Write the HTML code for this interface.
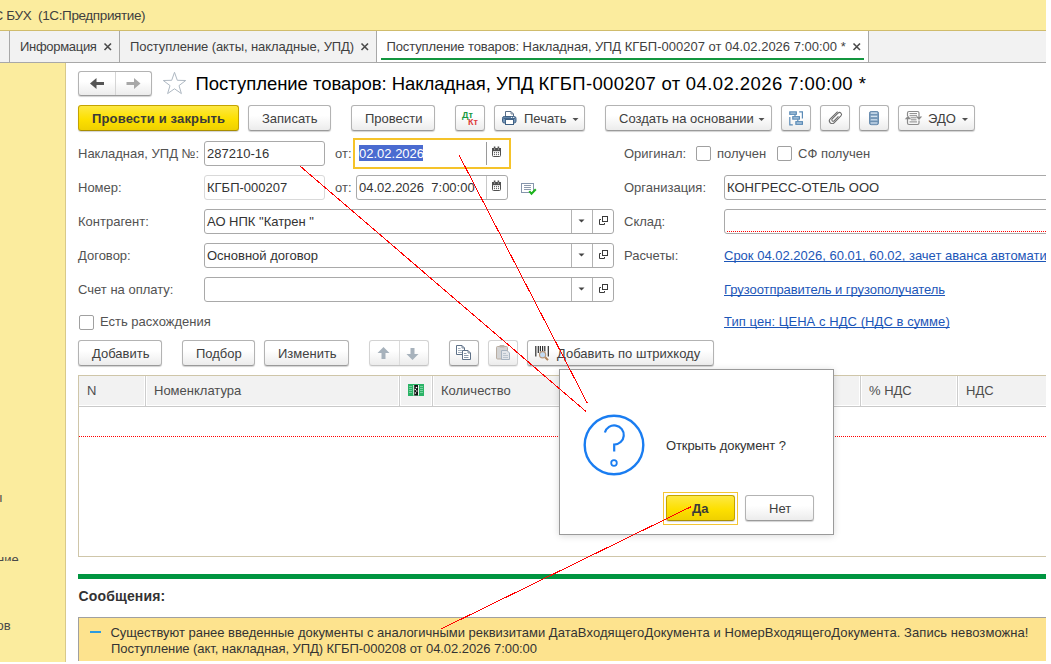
<!DOCTYPE html>
<html><head><meta charset="utf-8">
<style>
*{box-sizing:border-box;margin:0;padding:0}
html,body{width:1051px;height:664px;overflow:hidden;background:#fff}
body{position:relative;font-family:"Liberation Sans",sans-serif;font-size:13px;line-height:15px;color:#333}
.a{position:absolute;white-space:nowrap}
.t{position:absolute;white-space:nowrap;line-height:15px}
#titlebar{left:0;top:0;width:1051px;height:31px;background:#FBEC9E;border-bottom:1px solid #D0BC6C}
#tabbar{left:0;top:31px;width:1051px;height:32px;background:#F2F2F2;border-bottom:1px solid #A8A8A8}
.tsep{top:31px;width:1px;height:31px;background:#A8A8A8}
#side{left:0;top:63px;width:66px;height:601px;background:#FBEC9E;border-right:1px solid #D8C98A}
.btn{position:absolute;height:26px;border:1px solid #B3B3B3;border-bottom-color:#9A9A9A;border-radius:3px;background:linear-gradient(#FFFFFF 0%,#FFFFFF 40%,#ECECEC 100%);box-shadow:0 1px 1px rgba(0,0,0,.18);color:#404040;white-space:nowrap;overflow:hidden}
.btn.dis{border-color:#D3D3D3;border-bottom-color:#C4C4C4;box-shadow:0 1px 1px rgba(0,0,0,.08)}
.btn.y{background:linear-gradient(#FDE843 0%,#FDE000 55%,#EFD000 100%);border-color:#C4A300;border-bottom-color:#A88D00;font-weight:bold;color:#3A3A3A}
.lbl{position:absolute;white-space:nowrap;color:#525252;line-height:15px}
.inp{position:absolute;height:25px;border:1px solid #A9A9A9;border-radius:3px;background:#fff;color:#333;white-space:nowrap;overflow:hidden}
.inp.ro{border-color:#D9D9D9}
.link{position:absolute;white-space:nowrap;color:#1C56B8;line-height:15px;text-decoration:underline;text-decoration-skip-ink:none}
.cb{position:absolute;width:15px;height:15px;border:1px solid #A0A0A0;border-radius:2px;background:#fff}
.vsep{position:absolute;width:1px;background:#B3B3B3}
svg{position:absolute;overflow:visible}
</style></head><body>
<div id="titlebar" class="a"></div>
<div class="t" style="left:-6.4px;top:8px;font-size:13.5px;letter-spacing:-0.38px;color:#3F3F3F">С БУХ&nbsp;&nbsp;(1С:Предприятие)</div>
<div id="tabbar" class="a"></div>
<div class="a tsep" style="left:9px"></div>
<div class="t" style="left:20px;top:39px;color:#3F3F3F;letter-spacing:-0.3px">Информация</div>
<div class="a tsep" style="left:119px"></div>
<div class="t" style="left:130px;top:39px;color:#3F3F3F;letter-spacing:-0.09px">Поступление (акты, накладные, УПД)</div>
<div class="a tsep" style="left:376px"></div>
<div class="a" style="left:377px;top:31px;width:491px;height:31px;background:#fff"></div>
<div class="t" style="left:386.5px;top:39px;color:#3F3F3F;letter-spacing:-0.11px">Поступление товаров: Накладная, УПД</div>
<div class="t" style="left:624.7px;top:39px;color:#3F3F3F">КГБП-000207 от 04.02.2026 7:00:00 *</div>
<div class="a" style="left:381px;top:58px;width:483px;height:2px;background:#13963F"></div>
<div class="a tsep" style="left:868px"></div>
<svg style="left:0;top:0" width="1" height="1"><g stroke="#4A4A4A" stroke-width="1.6"><path d="M104.5 43.5l6.5 6.5M111 43.5L104.5 50"/><path d="M361.5 43.5l6.5 6.5M368 43.5L361.5 50"/><path d="M853.5 43.5l6.5 6.5M860 43.5L853.5 50"/></g></svg>

<div id="side" class="a"></div>
<div class="t" style="left:-7px;top:490px;color:#4A4A4A">ы</div>
<div class="a" style="left:0;top:556px;width:30px;height:5px;overflow:hidden"><div class="t" style="left:-3px;top:-4px;color:#4A4A4A">ние</div></div>
<div class="t" style="left:-3.4px;top:618px;color:#4A4A4A">ов</div>

<!-- form header -->
<div class="btn" style="left:78px;top:71px;width:74px;height:25px"></div>
<div class="a" style="left:115px;top:72px;width:1px;height:23px;background:#D5D5D5"></div>
<svg style="left:0;top:0" width="1" height="1">
 <path d="M90 83.5L96.5 78v4h7.5v3h-7.5v4z" fill="#555"/>
 <path d="M140.5 83.5L134 78v4h-7.5v3h7.5v4z" fill="#A8A8A8"/>
 <path d="M174.5 72.3 L177.3 80.3 L185.7 80.5 L179.0 85.6 L181.4 93.6 L174.5 88.8 L167.6 93.6 L170.0 85.6 L163.3 80.5 L171.7 80.3z" fill="none" stroke="#AEB8C2" stroke-width="1"/>
</svg>
<div class="t" style="left:195.6px;top:73.5px;font-size:18.5px;line-height:20px;color:#000;letter-spacing:-0.04px">Поступление товаров: Накладная, УПД</div>
<div class="t" style="left:538.4px;top:73.5px;font-size:18.5px;line-height:20px;color:#000;letter-spacing:0.33px">КГБП-000207 от</div>
<div class="t" style="left:685.8px;top:73.5px;font-size:18.5px;line-height:20px;color:#000;letter-spacing:0.435px">04.02.2026 7:00:00 *</div>

<!-- toolbar -->
<div class="btn y" style="left:78px;top:105px;width:161px"></div>
<div class="t" style="left:92px;top:111px;font-weight:bold;color:#3A3A3A;letter-spacing:0.15px">Провести и закрыть</div>
<div class="btn" style="left:248px;top:105px;width:83px"></div>
<div class="t" style="left:262px;top:111px;color:#404040">Записать</div>
<div class="btn" style="left:351px;top:105px;width:84px"></div>
<div class="t" style="left:365px;top:111px;color:#404040">Провести</div>
<div class="btn" style="left:455px;top:105px;width:30px"></div>
<div class="t" style="left:462px;top:109.5px;font-size:9px;line-height:10px;font-weight:bold;color:#17993F">Дт</div>
<div class="t" style="left:468px;top:117px;font-size:9px;line-height:10px;font-weight:bold;color:#DD3B3B">Кт</div>
<div class="btn" style="left:494px;top:105px;width:91px"></div>
<svg style="left:0;top:0" width="1" height="1">
 <path d="M505.5 116.5V111.5h5.5l2.5 2.5v2.5" fill="#fff" stroke="#5A6F88" stroke-width="1"/>
 <path d="M511 111.5v2.5h2.5" fill="none" stroke="#5A6F88" stroke-width=".8"/>
 <rect x="502.5" y="116.5" width="13.5" height="6.5" rx="1.8" fill="#7596B9" stroke="#3F6185" stroke-width="1"/>
 <path d="M503.5 118.3h11.5" stroke="#3F6185" stroke-width="1.2"/>
 <circle cx="511.6" cy="117.4" r=".55" fill="#fff"/><circle cx="513.7" cy="117.4" r=".55" fill="#fff"/>
 <rect x="505.5" y="119.5" width="8" height="5" fill="#fff" stroke="#3F6185" stroke-width="1"/>
</svg>
<div class="t" style="left:524px;top:111px;color:#404040">Печать</div>
<svg style="left:0;top:0" width="1" height="1"><path d="M572.5 118h6l-3 3z" fill="#505050"/></svg>
<div class="btn" style="left:605px;top:105px;width:167px"></div>
<div class="t" style="left:619px;top:111px;color:#404040">Создать на основании</div>
<svg style="left:0;top:0" width="1" height="1"><path d="M758.5 118h6l-3 3z" fill="#505050"/></svg>
<div class="btn" style="left:781px;top:105px;width:30px"></div>
<svg style="left:0;top:0" width="1" height="1">
 <g fill="#B3CCE2" stroke="#5A8AB6" stroke-width="1.2">
  <rect x="789.8" y="111.9" width="6.5" height="2.4"/>
  <rect x="792.8" y="116.7" width="6.6" height="2.4"/>
  <rect x="795.9" y="121.7" width="6.5" height="2.6"/>
 </g>
 <path d="M795 114.5v2M797.8 119.3v2.2M789.8 117v7.8h3M799.2 111.8h3.2v6.8" fill="none" stroke="#5A8AB6" stroke-width="1.2"/>
</svg>
<div class="btn" style="left:820px;top:105px;width:30px"></div>
<svg style="left:0;top:0" width="1" height="1">
 <path transform="translate(835.5 117.5) rotate(-45) scale(0.88)" d="M6.5 -3.1L-5.4 -3.1A3.1 3.1 0 0 0 -5.4 3.1L5.6 3.1A2.3 2.3 0 0 0 5.6 -1.5L-3.8 -1.5A1.5 1.5 0 0 0 -3.8 1.5L3.2 1.5" fill="none" stroke="#6A6A6A" stroke-width="1.2"/>
</svg>
<div class="btn" style="left:859px;top:105px;width:30px"></div>
<svg style="left:0;top:0" width="1" height="1">
 <rect x="869.5" y="111.5" width="9" height="13.2" rx="1.6" fill="#8BA9C6" stroke="#6A8DAF" stroke-width="1"/>
 <path d="M869.5 114.8h9M869.5 118.1h9M869.5 121.4h9" stroke="#6A8DAF" stroke-width="1"/>
 <path d="M871 113.1h6M871 116.4h6M871 119.7h6M871 123h6" stroke="#D3E2EF" stroke-width="1.1"/>
</svg>
<div class="btn" style="left:898px;top:105px;width:77px"></div>
<svg style="left:0;top:0" width="1" height="1">
 <path d="M907.5 116v-3a1.5 1.5 0 0 1 1.5-1.5h8.5a1.5 1.5 0 0 1 1.5 1.5v3.5M907.5 119v4a1.5 1.5 0 0 0 1.5 1.5h8.5a1.5 1.5 0 0 0 1.5-1.5v-2.5" fill="none" stroke="#8A8A8A" stroke-width="1.2"/>
 <path d="M909.5 113.6h7.5M909.5 115.7h7.5M910.5 117.8h6M911 119.8h5.5M909.5 121.9h7.5" stroke="#8A8A8A" stroke-width="1"/>
 <path d="M904.8 119.2l3.2-3.4 3.2 3.4z" fill="#8A8A8A"/>
 <path d="M915.8 116.6h6.4l-3.2 3.4z" fill="#8A8A8A"/>
</svg>
<div class="t" style="left:928px;top:111px;color:#404040">ЭДО</div>
<svg style="left:0;top:0" width="1" height="1"><path d="M962 118h6l-3 3z" fill="#505050"/></svg>

<!-- rows -->
<div class="lbl" style="left:78px;top:146px">Накладная, УПД №:</div>
<div class="inp" style="left:204px;top:141px;width:121px"></div>
<div class="t" style="left:207px;top:146px">287210-16</div>
<div class="lbl" style="left:335px;top:146px">от:</div>
<div class="a" style="left:353px;top:138px;width:158px;height:31px;border:2px solid #F5C32A;background:#fff"></div>
<div class="a" style="left:359px;top:145px;width:64px;height:16px;background:#4A6BD0"></div>
<div class="t" style="left:359px;top:146px;color:#fff">02.02.2026</div>
<div class="vsep" style="left:486px;top:142px;height:23px;background:#9A9A9A"></div>

<div class="lbl" style="left:78px;top:180px">Номер:</div>
<div class="inp ro" style="left:204px;top:175px;width:121px"></div>
<div class="t" style="left:207px;top:180px">КГБП-000207</div>
<div class="lbl" style="left:335px;top:180px">от:</div>
<div class="inp" style="left:356px;top:175px;width:152px"></div>
<div class="t" style="left:359px;top:180px">04.02.2026&nbsp;&nbsp;7:00:00</div>
<div class="vsep" style="left:486px;top:176px;height:23px;background:#C8C8C8"></div>
<svg style="left:0;top:0" width="1" height="1">
 <g id="cal"><rect x="492.5" y="148.5" width="8" height="8" rx="1" fill="#fff" stroke="#505050" stroke-width="1"/><rect x="492" y="148" width="9" height="3.2" fill="#505050"/><path d="M494.6 146.6v2.6M498.4 146.6v2.6" stroke="#505050" stroke-width="1.6"/><path d="M494.6 148.6v.9M498.4 148.6v.9" stroke="#fff" stroke-width=".8"/><g fill="#505050"><circle cx="494.5" cy="152.7" r=".6"/><circle cx="496.5" cy="152.7" r=".6"/><circle cx="498.5" cy="152.7" r=".6"/><circle cx="494.5" cy="154.6" r=".6"/><circle cx="496.5" cy="154.6" r=".6"/><circle cx="498.5" cy="154.6" r=".6"/></g></g>
 <use href="#cal" x="0" y="34"/>
 <rect x="521.5" y="183.5" width="12" height="9" fill="#fff" stroke="#8696AC" stroke-width="1"/>
 <path d="M524 185.5h7M524 187.5h7M524 189.5h7" stroke="#8E9BAE" stroke-width="1"/>
 <path d="M529.3 191.2l2.2 2.6 4.3-4.6" fill="none" stroke="#1DB41D" stroke-width="2"/>
</svg>

<div class="lbl" style="left:78px;top:214px">Контрагент:</div>
<div class="inp" style="left:204px;top:209px;width:410px"></div>
<div class="t" style="left:207px;top:214px">АО НПК "Катрен "</div>
<div class="lbl" style="left:78px;top:248px">Договор:</div>
<div class="inp" style="left:204px;top:243px;width:410px"></div>
<div class="t" style="left:207px;top:248px">Основной договор</div>
<div class="lbl" style="left:78px;top:282px">Счет на оплату:</div>
<div class="inp" style="left:204px;top:277px;width:410px"></div>
<div class="vsep" style="left:571px;top:210px;height:23px"></div><div class="vsep" style="left:592px;top:210px;height:23px"></div>
<div class="vsep" style="left:571px;top:244px;height:23px"></div><div class="vsep" style="left:592px;top:244px;height:23px"></div>
<div class="vsep" style="left:571px;top:278px;height:23px"></div><div class="vsep" style="left:592px;top:278px;height:23px"></div>
<svg style="left:0;top:0" width="1" height="1">
 <g id="dd"><path d="M578.5 219.5h6l-3 3z" fill="#444"/>
 <rect x="602.5" y="216.5" width="5" height="5" fill="none" stroke="#3A3A3A" stroke-width="1"/><path d="M601 219.5H599.5V224.5H604.5V223" fill="none" stroke="#3A3A3A" stroke-width="1"/></g>
 <use href="#dd" x="0" y="34"/><use href="#dd" x="0" y="68"/>
</svg>

<!-- right column -->
<div class="lbl" style="left:624px;top:146px">Оригинал:</div>
<div class="cb" style="left:696px;top:146px"></div>
<div class="lbl" style="left:717px;top:146px">получен</div>
<div class="cb" style="left:777px;top:146px"></div>
<div class="lbl" style="left:798px;top:146px">СФ получен</div>
<div class="lbl" style="left:624px;top:180px">Организация:</div>
<div class="inp" style="left:724px;top:175px;width:340px"></div>
<div class="t" style="left:727px;top:180px">КОНГРЕСС-ОТЕЛЬ ООО</div>
<div class="lbl" style="left:624px;top:214px">Склад:</div>
<div class="inp" style="left:724px;top:209px;width:340px"></div>
<div class="a" style="left:727px;top:231px;width:330px;height:1px;background-image:linear-gradient(90deg,#FF0000 50%,transparent 50%);background-size:2px 1px"></div>
<div class="lbl" style="left:624px;top:248px">Расчеты:</div>
<div class="link" style="left:724px;top:248px">Срок 04.02.2026, 60.01, 60.02, зачет аванса автоматически</div>
<div class="link" style="left:724px;top:282px;letter-spacing:-0.06px">Грузоотправитель и грузополучатель</div>
<div class="link" style="left:724px;top:314px;letter-spacing:0.06px">Тип цен: ЦЕНА с НДС (НДС в сумме)</div>

<!-- checkbox row -->
<div class="cb" style="left:79px;top:315px"></div>
<div class="lbl" style="left:100px;top:314px">Есть расхождения</div>

<!-- table toolbar -->
<div class="btn" style="left:78px;top:340px;width:84px"></div>
<div class="t" style="left:92px;top:346px;color:#404040">Добавить</div>
<div class="btn" style="left:182px;top:340px;width:73px"></div>
<div class="t" style="left:196px;top:346px;color:#404040">Подбор</div>
<div class="btn" style="left:264px;top:340px;width:85px"></div>
<div class="t" style="left:278px;top:346px;color:#404040">Изменить</div>
<div class="btn dis" style="left:369px;top:340px;width:60px"></div>
<div class="a" style="left:399px;top:341px;width:1px;height:24px;background:#DCDCDC"></div>
<svg style="left:0;top:0" width="1" height="1">
 <path d="M383.5 347l-6 6h4v6h4v-6h4z" fill="#A7B2BC"/>
 <path d="M412.5 360l-6-6h4v-6h4v6h4z" fill="#A7B2BC"/>
</svg>
<div class="btn" style="left:449px;top:340px;width:30px"></div>
<svg style="left:0;top:0" width="1" height="1">
 <path d="M456.5 345.5h5.5l2.5 2.5v6.5h-8z" fill="#fff" stroke="#5E7188" stroke-width="1"/>
 <path d="M462 345.5v2.5h2.5" fill="none" stroke="#5E7188" stroke-width=".8"/>
 <path d="M458 348.5h2.5M458 350.5h4.5M458 352.5h4.5" stroke="#9AA8B8" stroke-width=".9"/>
 <path d="M462.5 350.5h5.5l2.5 2.5v6.5h-8z" fill="#fff" stroke="#5E7188" stroke-width="1"/>
 <path d="M468 350.5v2.5h2.5" fill="none" stroke="#5E7188" stroke-width=".8"/>
 <path d="M464 353.5h2.5M464 355.5h4.5M464 357.5h4.5" stroke="#7F90A4" stroke-width=".9"/>
</svg>
<div class="btn dis" style="left:488px;top:340px;width:30px"></div>
<svg style="left:0;top:0" width="1" height="1">
 <rect x="496.5" y="346.5" width="11" height="12.5" rx="1" fill="#D3D3D3" stroke="#B9ADA2" stroke-width="1"/>
 <rect x="499.5" y="345" width="5" height="2.5" rx=".8" fill="#BDB2A8"/>
 <path d="M501.5 350.5h5.5l2.5 2.5v6.5h-8z" fill="#E3E6EA" stroke="#A6B3C0" stroke-width="1"/>
 <path d="M503 353.5h3M503 355.5h5M503 357.5h5" stroke="#B5C0CB" stroke-width=".9"/>
</svg>
<div class="btn" style="left:527px;top:340px;width:187px"></div>
<svg style="left:0;top:0" width="1" height="1">
 <path d="M535.8 346v10.5M538.3 346v7M540.4 346v5.5M542.6 346v5.5M544.8 346v5.5M548.3 346v10.5" stroke="#2E2E2E" stroke-width="1.2"/>
 <path d="M545.2 357.3l2.8 2.8" stroke="#B08358" stroke-width="2"/>
 <circle cx="542.6" cy="354.8" r="3.1" fill="#C3DBF3" stroke="#B8997C" stroke-width="1.2"/>
</svg>
<div class="t" style="left:557px;top:346px;color:#404040">Добавить по штрихкоду</div>

<!-- table -->
<div class="a" style="left:78px;top:375px;width:968px;height:182px;border:1px solid #CFC6A9;border-right:none"></div>
<div class="a" style="left:79px;top:376px;width:967px;height:31px;background:#F2F2F2;border-bottom:1px solid #C9C9C9"></div>
<div class="a" style="left:79px;top:405px;width:967px;height:1px;background:#fff"></div>
<div class="a" style="left:144px;top:376px;width:3px;height:30px;background:#fff"></div><div class="vsep" style="left:145px;top:376px;height:30px;background:#CDCDCD"></div>
<div class="a" style="left:398px;top:376px;width:3px;height:30px;background:#fff"></div><div class="vsep" style="left:399px;top:376px;height:30px;background:#CDCDCD"></div>
<div class="a" style="left:431px;top:376px;width:3px;height:30px;background:#fff"></div><div class="vsep" style="left:432px;top:376px;height:30px;background:#CDCDCD"></div>
<div class="a" style="left:859px;top:376px;width:3px;height:30px;background:#fff"></div><div class="vsep" style="left:860px;top:376px;height:30px;background:#CDCDCD"></div>
<div class="a" style="left:956px;top:376px;width:3px;height:30px;background:#fff"></div><div class="vsep" style="left:957px;top:376px;height:30px;background:#CDCDCD"></div>
<div class="t" style="left:87px;top:383px;color:#4D4D4D">N</div>
<div class="t" style="left:154px;top:383px;color:#4D4D4D">Номенклатура</div>
<svg style="left:0;top:0" width="1" height="1">
 <rect x="408" y="384" width="16" height="12" fill="#2BB366"/>
 <path d="M409 386.5h3M409 388.5h3M409 390.5h3M409 392.5h3M420 386.5h3M420 388.5h3M420 390.5h3M420 392.5h3" stroke="#7FD6A6" stroke-width=".9"/>
 <rect x="413.3" y="385" width="5.6" height="10.5" fill="#fff"/>
 <rect x="414.2" y="385" width="3.8" height="10.5" fill="#111"/>
 <circle cx="416.5" cy="387.5" r=".8" fill="#fff"/><circle cx="415.3" cy="389.5" r=".7" fill="#fff"/><circle cx="416.8" cy="391" r=".7" fill="#fff"/><circle cx="415.4" cy="393" r=".8" fill="#fff"/>
</svg>
<div class="t" style="left:441px;top:383px;color:#4D4D4D">Количество</div>
<div class="t" style="left:869px;top:383px;color:#4D4D4D">% НДС</div>
<div class="t" style="left:966px;top:383px;color:#4D4D4D">НДС</div>
<div class="a" style="left:79px;top:436px;width:967px;height:1px;background-image:linear-gradient(90deg,#FF0000 50%,transparent 50%);background-size:2px 1px"></div>

<!-- green bar & messages -->
<div class="a" style="left:78px;top:574px;width:968px;height:5px;background:#009540"></div>
<div class="t" style="left:78.5px;top:589px;font-weight:bold;font-size:14px;color:#333;letter-spacing:0.15px">Сообщения:</div>
<div class="a" style="left:78px;top:617px;width:968px;height:44px;background:#FDE38E;border-top:1px solid #A0A0A0;border-left:1px solid #A0A0A0"></div>
<div class="a" style="left:90px;top:631px;width:11px;height:2px;background:#2C9BE0"></div>
<div class="t" style="left:110.4px;top:625px;color:#333;letter-spacing:-0.016px">Существуют ранее введенные документы с аналогичными реквизитами</div>
<div class="t" style="left:548.8px;top:625px;color:#333;letter-spacing:0.069px">ДатаВходящегоДокумента и НомерВходящегоДокумента. Запись невозможна!</div>
<div class="t" style="left:111px;top:641px;color:#333;letter-spacing:-0.06px">Поступление (акт, накладная, УПД) КГБП-000208 от 04.02.2026 7:00:00</div>

<!-- dialog -->
<div class="a" style="left:559px;top:369px;width:275px;height:166px;background:#fff;border:1px solid #9A9A9A;box-shadow:0 1px 7px rgba(0,0,0,.15)"></div>
<svg style="left:0;top:0" width="1" height="1">
 <circle cx="614" cy="445" r="29.3" fill="none" stroke="#1A7DF1" stroke-width="2.4"/>
 <path d="M604.9 432.5A9.6 9.6 0 1 1 614.2 444.6V451.6" fill="none" stroke="#1A7DF1" stroke-width="2.2"/>
 <circle cx="614" cy="463" r="2.8" fill="none" stroke="#1A7DF1" stroke-width="1.8"/>
</svg>
<div class="t" style="left:666px;top:438px;color:#333;letter-spacing:-0.11px">Открыть документ ?</div>
<div class="a" style="left:663px;top:492px;width:75px;height:33px;border:1px solid #F4C534"></div>
<div class="btn y" style="left:666px;top:495px;width:69px;height:26px"></div>
<div class="t" style="left:692px;top:501px;font-weight:bold;color:#3A3A3A">Да</div>
<div class="btn" style="left:745px;top:495px;width:69px;height:26px"></div>
<div class="t" style="left:769px;top:501px;color:#404040">Нет</div>

<!-- red annotation lines -->
<svg style="left:0;top:0" width="1" height="1">
 <g stroke="#FF0000" stroke-width="1" fill="none" shape-rendering="crispEdges">
  <path d="M300 166L586 411.5"/>
  <path d="M459 155L587.5 403.5"/>
  <path d="M441 629L691.5 506.5"/>
 </g>
</svg>
<div class="a" style="left:1046px;top:0;width:5px;height:664px;background:#fff"></div>
<div class="a" style="left:0;top:662px;width:1051px;height:2px;background:#fff"></div>
</body></html>
